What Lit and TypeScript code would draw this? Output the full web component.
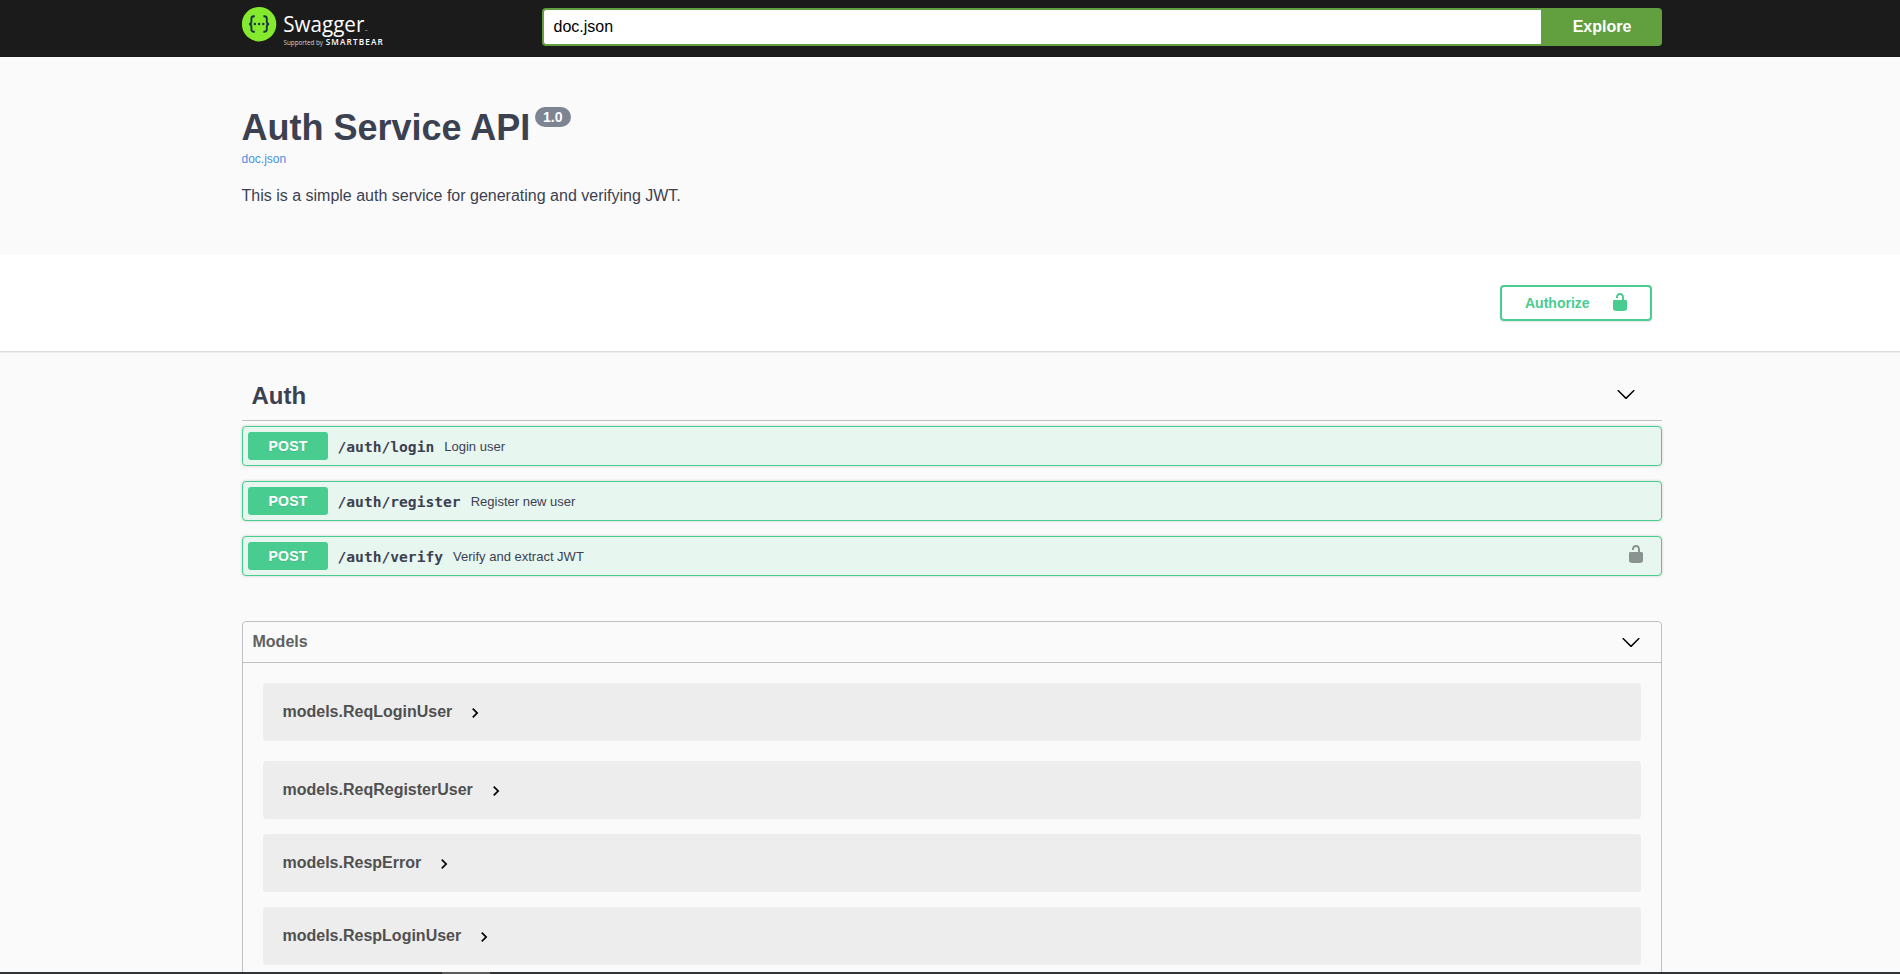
import { LitElement, html, css, svg } from "lit";
import { customElement } from "lit/decorators.js";

interface Operation {
  path: string;
  summary: string;
  secured?: boolean;
}

const OPERATIONS: Operation[] = [
  { path: "/auth/login", summary: "Login user" },
  { path: "/auth/register", summary: "Register new user" },
  { path: "/auth/verify", summary: "Verify and extract JWT", secured: true },
];

const MODELS = ["models.ReqLoginUser", "models.ReqRegisterUser", "models.RespError", "models.RespLoginUser"];

const unlocked = svg`<path d="M15.8 8H14V5.6C14 2.703 12.665 1 10 1 7.334 1 6 2.703 6 5.6V6h2v-.801C8 3.754 8.797 3 10 3c1.203 0 2 .754 2 2.199V8H4c-.553 0-1 .646-1 1.199V17c0 .549.428 1.139.951 1.307l1.197.387C5.672 18.861 6.55 19 7.1 19h5.8c.549 0 1.428-.139 1.951-.307l1.196-.387c.524-.167.953-.757.953-1.306V9.199C17 8.646 16.352 8 15.8 8z"/>`;
const arrowDown = svg`<path d="M17.418 6.109c.272-.268.709-.268.979 0s.271.701 0 .969l-7.908 7.83c-.27.268-.707.268-.979 0l-7.908-7.83c-.27-.268-.27-.701 0-.969.271-.268.709-.268.979 0L10 13.25l7.418-7.141z"/>`;

@customElement("app-root")
export class AppRoot extends LitElement {
  static styles = css`
    :host {
      display: block;
      position: relative;
      height: 974px;
      overflow: hidden;
      background: #fafafa;
      color: #3b4151;
      font-family: "Liberation Sans", Arial, sans-serif;
    }
    * { box-sizing: border-box; }
    svg { display: block; flex: none; }
    h1, h2, h3, p { margin: 0; }
    .wrap { width: 1420px; margin: 0 auto; position: relative; left: 2px; }
    .topbar { height: 57px; background: #1b1b1b; }
    .topbar .wrap { display: flex; padding-top: 8px; }
    .logo { margin-top: -8px; width: 300px; height: 57px; }
    .url {
      width: 999px; height: 38px; border: 2px solid #62a03f; border-right: 0;
      border-radius: 4px 0 0 4px; background: #fff; color: #000;
      padding: 0 9.5px; font-size: 16px; line-height: 34px;
    }
    .explore {
      width: 121px; height: 38px; border-radius: 0 4px 4px 0; background: #62a03f;
      color: #fff; font-weight: 700; font-size: 16px; line-height: 38px; text-align: center;
      padding-left: 1px;
    }
    .info { height: 198px; padding-top: 50px; }
    .info .wrap { left: 1.5px; }
    .title { display: flex; gap: 4.5px; height: 42px; }
    .title h1 { font-size: 36px; line-height: 42px; white-space: nowrap; }
    .version {
      width: 36px; height: 20px; border-radius: 10px; background: #7d8492; color: #fff;
      font-size: 14px; font-weight: 700; line-height: 20px; text-align: center;
    }
    .link { font-size: 12px; line-height: 20px; color: #4990e2; }
    .desc { font-size: 16px; line-height: 20px; padding-top: 17px; }
    .schemes { height: 97px; background: #fff; border-bottom: 1px solid #dedede; box-shadow: 0 1px 1px rgba(0,0,0,.04); padding-top: 30px; }
    .schemes .wrap { display: flex; justify-content: flex-end; padding-right: 10px; }
    .authorize {
      width: 152px; height: 36px; border: 2px solid #49cc90; border-radius: 4px;
      color: #49cc90; fill: #49cc90; font-size: 14px; font-weight: 700; line-height: 32px;
      display: flex; justify-content: space-between; align-items: center; padding: 0 20px 0 23px;
      box-shadow: 0 1px 2px rgba(0,0,0,.1);
    }
    .authorize svg { margin-top: -2px; }
    .tag {
      height: 69px; border-bottom: 1px solid #bfc0c4; padding: 22px 26px 0 9.5px;
      display: flex; justify-content: space-between;
    }
    .tag h3 { font-size: 24px; line-height: 44px; }
    .tag svg { margin-top: 10px; }
    .ops { display: flex; flex-direction: column; gap: 15px; padding-top: 5px; }
    .op {
      height: 40px; border: 1px solid #49cc90; border-radius: 4px; background: #e8f6f0;
      box-shadow: 0 0 3px rgba(0,0,0,.19); display: flex; align-items: center; padding: 0 15px 0 5px;
    }
    .method {
      width: 80px; height: 28px; border-radius: 3px; background: #49cc90; color: #fff;
      font-size: 14px; font-weight: 700; line-height: 28px; text-align: center;
      text-shadow: 0 1px 0 rgba(0,0,0,.1); letter-spacing: .2px;
    }
    .path { font: 700 14.62px/20px "DejaVu Sans Mono", monospace; padding: 2px 10px 0 9.5px; }
    .summary { font-size: 13px; line-height: 20px; flex: 1; padding-top: 1px; }
    .op svg { opacity: .4; fill: #000; margin-top: -4px; }
    .models {
      margin-top: 45px; height: 380px; border: 1px solid #bfc0c4; border-radius: 4px;
    }
    .models-head {
      height: 41px; border-bottom: 1px solid #bfc0c4; display: flex; align-items: center;
      justify-content: space-between; padding: 0 20px 0 9.5px; color: #606060;
    }
    .models-head h2 { font-size: 16px; line-height: 20px; }
    .models-list { padding: 20px; display: flex; flex-direction: column; gap: 15px; }
    .model {
      height: 58px; flex: none; border-radius: 4px; background: #ededed; color: #505050;
      display: flex; align-items: center; gap: 12.8px; padding-left: 19.5px;
      font-size: 16px; font-weight: 700;
    }
    .model:first-child { margin-bottom: 5px; }
    .model span { line-height: 20px; }
    .model svg { margin-top: 2px; }
    .edge { position: absolute; left: 0; right: 0; bottom: 0; height: 2px; background: #333436; padding-left: 442px; }
    .edge-thumb { width: 48px; height: 2px; background: #5c5c5c; }
  `;

  private logo() {
    return html`<svg class="logo" width="300" height="57" viewBox="0 0 300 57">
      <circle cx="17.1" cy="24.2" r="17.2" fill="#85ea2d"/>
      <g fill="none" stroke="#173647" stroke-width="1.9">
        <path d="M12.8 16.3h-.9c-1.7 0-2.5.9-2.5 2.5v2.6c0 1.7-.8 2.6-2.4 2.6 1.6 0 2.4.9 2.4 2.6v2.7c0 1.6.8 2.5 2.5 2.5h.9"/>
        <path d="M21.4 16.3h.9c1.7 0 2.5.9 2.5 2.5v2.6c0 1.7.8 2.6 2.4 2.6-1.6 0-2.4.9-2.4 2.6v2.7c0 1.6-.8 2.5-2.5 2.5h-.9"/>
      </g>
      <g fill="#173647"><circle cx="12.9" cy="24.1" r="1.25"/><circle cx="17.1" cy="24.1" r="1.25"/><circle cx="21.3" cy="24.1" r="1.25"/></g>
      <g fill="#fff" font-family="Open Sans, Noto Sans, sans-serif">
        <text x="41.3" y="31.5" font-size="22.5" textLength="81" lengthAdjust="spacingAndGlyphs">Swagger</text>
        <text x="41.5" y="45.3" font-size="6.4" fill="#d0d0d0" textLength="39.5" lengthAdjust="spacing">Supported by</text>
        <text x="83.7" y="45.3" font-size="8.2" font-weight="600" textLength="57">SMARTBEAR</text>
      </g>
      <path d="M123 30.5h2.5" stroke="#888" stroke-width=".8"/>
    </svg>`;
  }

  render() {
    return html`
      <header class="topbar"><div class="wrap">
        ${this.logo()}
        <div class="url">doc.json</div>
        <div class="explore">Explore</div>
      </div></header>
      <section class="info"><div class="wrap">
        <div class="title"><h1>Auth Service API</h1><span class="version">1.0</span></div>
        <div class="link">doc.json</div>
        <p class="desc">This is a simple auth service for generating and verifying JWT.</p>
      </div></section>
      <section class="schemes"><div class="wrap">
        <div class="authorize"><span>Authorize</span><svg width="20" height="20">${unlocked}</svg></div>
      </div></section>
      <main class="wrap">
        <div class="tag"><h3>Auth</h3><svg width="20" height="20">${arrowDown}</svg></div>
        <div class="ops">
          ${OPERATIONS.map((o) => html`<div class="op">
            <span class="method">POST</span><span class="path">${o.path}</span><span class="summary">${o.summary}</span>
            ${o.secured ? html`<svg width="20" height="20">${unlocked}</svg>` : ""}
          </div>`)}
        </div>
        <section class="models">
          <div class="models-head"><h2>Models</h2><svg width="20" height="20">${arrowDown}</svg></div>
          <div class="models-list">
            ${MODELS.map((m) => html`<div class="model"><span>${m}</span>
              <svg width="20" height="20" viewBox="0 0 24 24"><path d="M10 6L8.59 7.41 13.17 12l-4.58 4.59L10 18l6-6z"/></svg></div>`)}
          </div>
        </section>
      </main>
      <div class="edge"><div class="edge-thumb"></div></div>`;
  }
}
